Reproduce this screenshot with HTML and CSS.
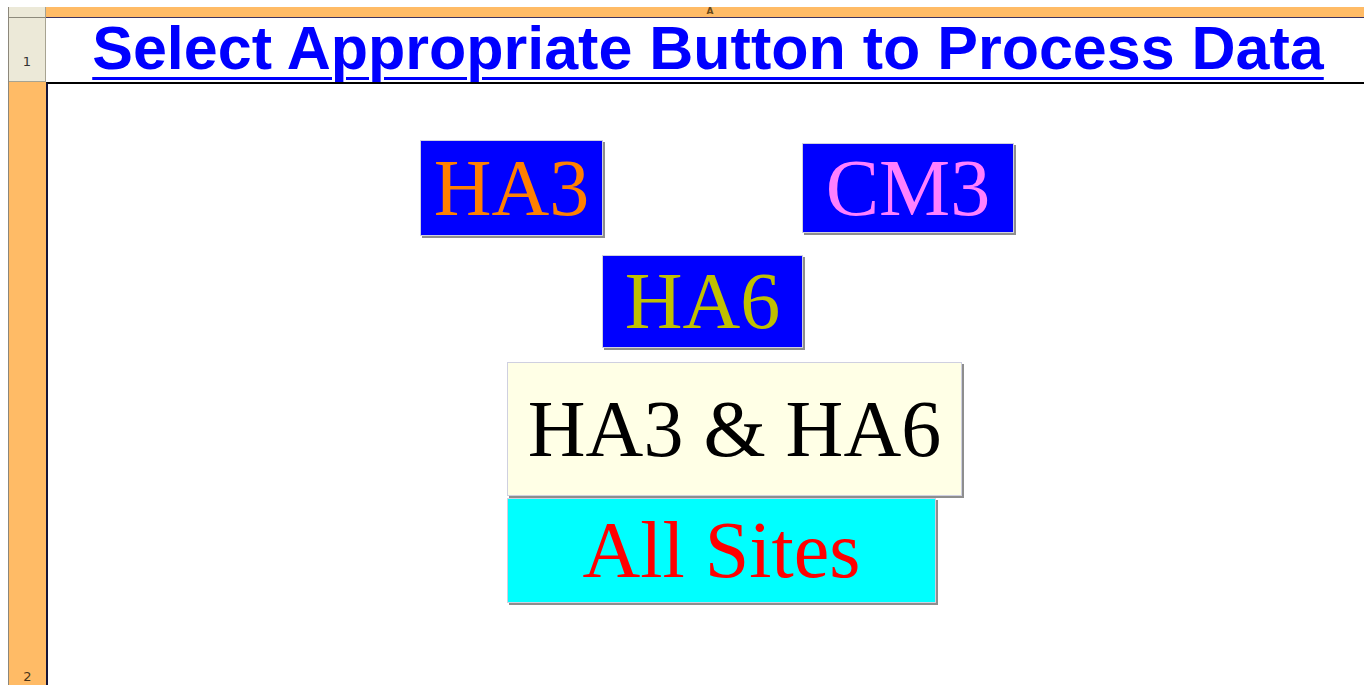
FILE: index.html
```html
<!doctype html>
<html lang="en">

<head>
    <meta charset="UTF-8">
    <title>Select Appropriate Button</title>
    <link rel="stylesheet" href="styles.css">
</head>

<body>
    <div class="sheet">
        <div class="corner"></div>
        <div class="col-head">A</div>

        <div class="row-head">1</div>
        <div class="title-cell">
            <span class="title">Select Appropriate Button to Process Data</span>
        </div>

        <div class="row-head on">2</div>
        <div class="board">
            <div class="line">
                <div class="btn ha3">HA3</div>
                <div class="btn cm3">CM3</div>
            </div>
            <div class="btn ha6">HA6</div>
            <div class="btn both">HA3 &amp; HA6</div>
            <div class="btn all">All Sites</div>
        </div>
    </div>
</body>

</html>
```

FILE: styles.css
```css
* {
    margin: 0;
    padding: 0;
    box-sizing: border-box;
}

body {
    background: #fff;
    overflow: hidden;
    font-family: "Liberation Sans", Arial, sans-serif;
}

.sheet {
    margin: 7px 0 0 8px;
    height: 678px;
    display: grid;
    grid-template-columns: 37px 1fr;
    grid-template-rows: 11px 64px 1fr;
    border-left: 1px solid #8c877b;
}

.corner {
    background: #ece9d8;
    border-right: 1px solid #a7a391;
    border-bottom: 1px solid #8d8a7c;
}

.col-head {
    background: #ffbb66;
    border-bottom: 1px solid #3c3260;
    text-align: center;
    font: bold 9px/6px "DejaVu Sans", sans-serif;
    color: #6a4a1a;
    padding: 1px 0 0 10px;
}

.row-head {
    background: #ece9d8;
    border-right: 1px solid #a7a391;
    border-bottom: 1px solid #a7a391;
    display: flex;
    align-items: flex-end;
    justify-content: center;
    padding-bottom: 12px;
    font: 13px/14px "DejaVu Sans", sans-serif;
    color: #333;
}

/* selected row */
.row-head.on {
    background: #ffbb66;
    border-right: none;
    border-bottom: none;
    color: #4a3418;
    padding-bottom: 1px;
}

.title-cell {
    background: #fff;
    text-align: center;
    white-space: nowrap;
    padding-left: 6px;
}

.title {
    font-weight: bold;
    font-size: 61px;
    line-height: 60px;
    color: #0000ff;
    text-decoration: underline;
    text-decoration-thickness: 3px;
    text-underline-offset: 8px;
}

.board {
    border-top: 2px solid #000;
    border-left: 2px solid #15153a;
    padding-top: 56px;
}

.line {
    display: flex;
    align-items: flex-start;
}

.btn {
    display: flex;
    align-items: center;
    justify-content: center;
    font-family: "Liberation Serif", "Times New Roman", serif;
    font-size: 80px;
    white-space: nowrap;
    border: 1px solid #cfd0e0;
    box-shadow: 2px 2px 0 #8e8e8e;
}

.ha3 {
    width: 183px;
    height: 96px;
    margin-left: 372px;
    background: #0000ff;
    color: #ff8000;
}

.cm3 {
    width: 212px;
    height: 90px;
    margin: 3px 0 0 199px;
    background: #0000ff;
    color: #ff80ff;
}

.ha6 {
    width: 201px;
    height: 93px;
    margin: 19px 0 0 554px;
    background: #0000ff;
    color: #c0c000;
}

.both {
    width: 455px;
    height: 134px;
    margin: 14px 0 0 459px;
    background: #ffffe6;
    color: #000;
}

.all {
    width: 429px;
    height: 105px;
    margin: 2px 0 0 459px;
    background: #00ffff;
    color: #ff0000;
}
```
